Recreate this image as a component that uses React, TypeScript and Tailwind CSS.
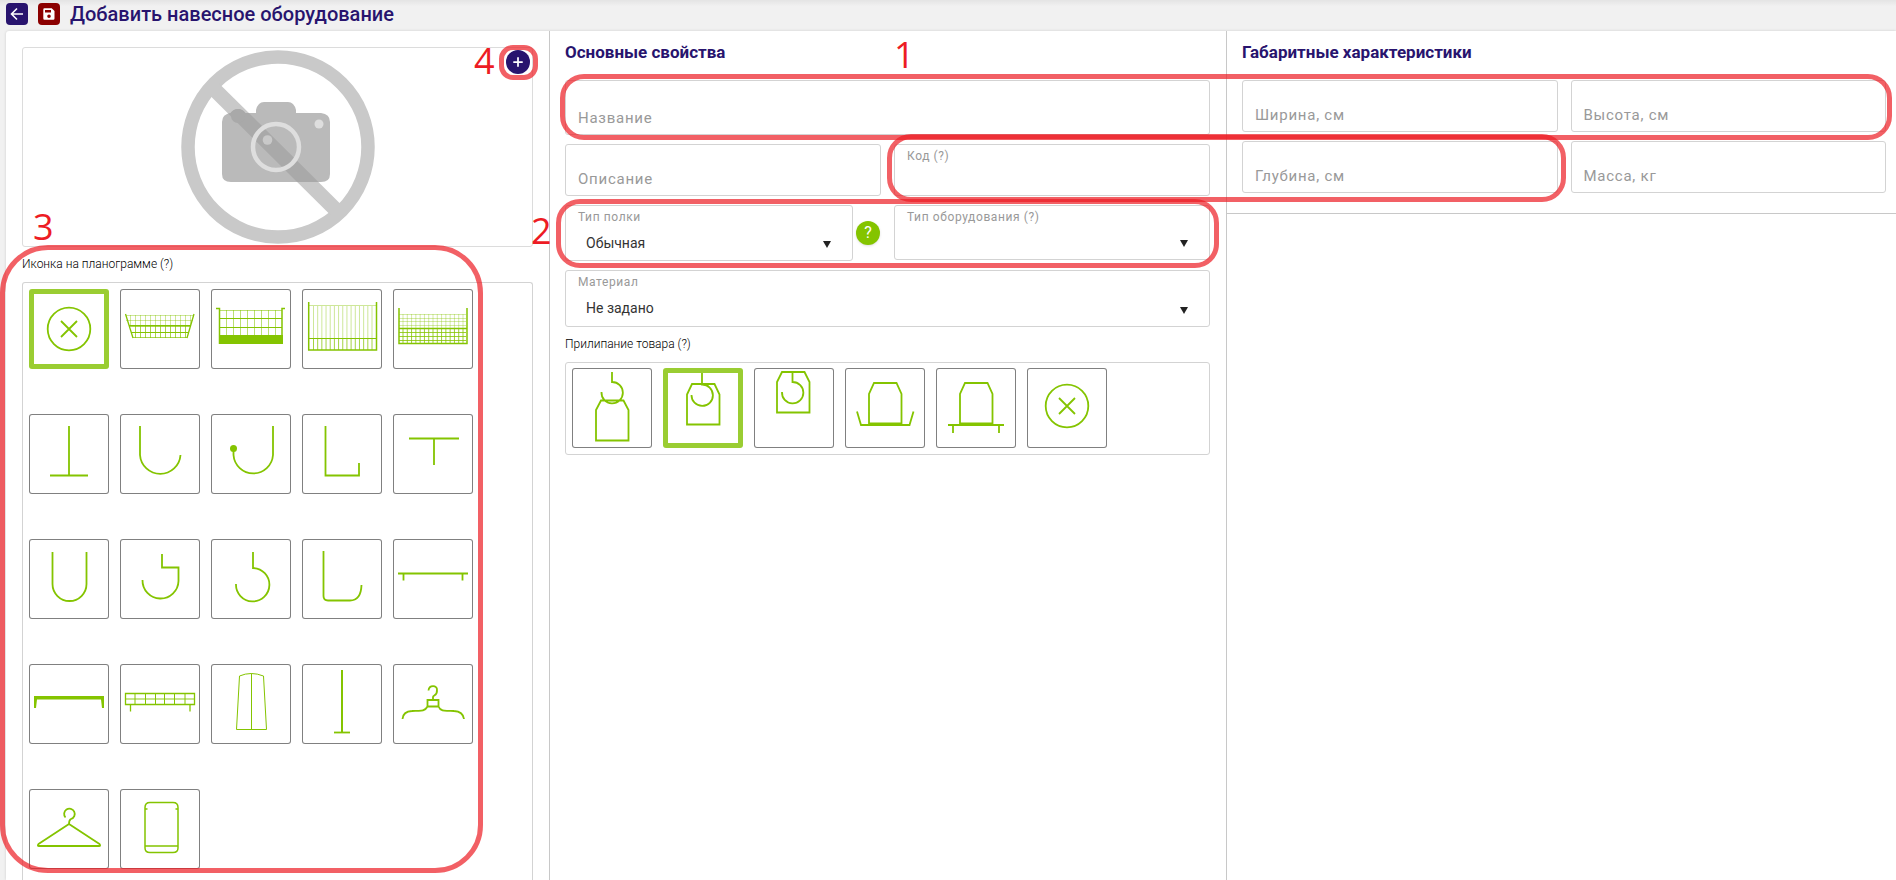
import { useId, useState } from 'react'
import type { ReactNode } from 'react'
import { Plus } from 'lucide-react'
import clsx from 'clsx'

const GREEN = '#84c400'

function lines(from: number, to: number, count: number): number[] {
  return Array.from({ length: count }, (_, i) => from + ((to - from) * i) / (count - 1))
}

const vertical = (xs: number[], y1: number, y2: number) => xs.map(x => `M${x} ${y1}V${y2}`).join('')
const horizontal = (ys: number[], x1: number, x2: number) => ys.map(y => `M${x1} ${y}H${x2}`).join('')

interface TileIcon {
  id: string
  label: string
  art: ReactNode
}

// All tile drawings share an 80x80 canvas
const PLANOGRAM_ICONS: TileIcon[] = [
  {
    id: 'none',
    label: 'Без иконки',
    art: (
      <>
        <circle cx="40" cy="40" r="21.300" />
        <path d="M32 32l16 16M48 32L32 48" />
      </>
    ),
  },
  {
    id: 'basket-slanted',
    label: 'Корзина наклонная',
    art: (
      <>
        <path strokeWidth="1" opacity=".4" d={vertical(lines(10.5, 70.5, 13), 26, 36) + horizontal([26.5, 31.5], 6, 73)} />
        <path strokeWidth="1" opacity=".7" d={vertical(lines(15.5, 65.5, 11), 37, 49) + horizontal([48.5], 13, 67)} />
        <path strokeWidth="1" d="M11 43.500H69M9 36.500H71M9 37.200H71" />
        <path strokeWidth="1.300" d="M5.500 25L13 49M67 49L74 25" />
      </>
    ),
  },
  {
    id: 'basket-solid',
    label: 'Корзина с дном',
    art: (
      <>
        <path strokeWidth="1" opacity=".55" d={vertical(lines(15.5, 64.5, 8), 21, 47) + 'M8 21.500H71'} />
        <path strokeWidth="1" d={horizontal([29.5, 38.5], 8, 71)} />
        <path strokeWidth="1.500" d="M5 19.500H8.500V55M71 55V19.500H74" />
        <path fill={GREEN} stroke="none" d="M8 46h64v9H8z" />
      </>
    ),
  },
  {
    id: 'basket-tall',
    label: 'Корзина высокая',
    art: (
      <>
        <path strokeWidth="1" opacity=".4" d={vertical(lines(11.5, 70, 15), 17, 49) + horizontal([16.5], 7, 74)} />
        <path strokeWidth="1" opacity=".75" d={vertical(lines(11.5, 70, 15), 49, 61)} />
        <path strokeWidth="1" d="M7 49.500H74" />
        <path strokeWidth="1.500" d="M6.700 13V61H74.500V13" />
      </>
    ),
  },
  {
    id: 'basket-mesh',
    label: 'Корзина сетчатая',
    art: (
      <>
        <path strokeWidth="1" opacity=".35" d={vertical(lines(10, 70, 15), 25, 39) + horizontal([25.5, 29.5, 32.5, 36.5], 6, 73)} />
        <path strokeWidth="1" opacity=".8" d={vertical(lines(10, 70, 15), 39, 54) + horizontal([43.5, 47.5, 51.5], 6, 73)} />
        <path strokeWidth="1.300" d="M6 39.500H74" />
        <path strokeWidth="1.500" d="M6 19V54.500H74V19" />
      </>
    ),
  },
  { id: 'stand', label: 'Стойка', art: <path d="M40 12V61M21 61.500H59" /> },
  { id: 'hook-j', label: 'Крючок J', art: <path d="M20 12V41A20.300 20.300 0 0 0 60.500 41" /> },
  {
    id: 'hook-ball',
    label: 'Крючок с шариком',
    art: (
      <>
        <path d="M62 12V41A19.800 19.800 0 0 1 22.500 41V35" />
        <circle cx="22.500" cy="34.500" r="3.500" fill={GREEN} stroke="none" />
      </>
    ),
  },
  { id: 'hook-l', label: 'Крючок L', art: <path d="M23.500 12V61.500H57V49" /> },
  { id: 'tee', label: 'Полка Т', art: <path d="M16 24.500H66M41 24.500V51" /> },
  { id: 'hook-u', label: 'Крючок U', art: <path d="M23.500 13V45A17 17 0 0 0 57.500 45V13" /> },
  { id: 'hook-step', label: 'Крючок со ступенью', art: <path d="M42 15V28.500H58.500V42A18 18 0 0 1 22.500 41" /> },
  { id: 'hook-round', label: 'Крючок круглый', art: <path d="M42 13V29A16.700 16.700 0 1 1 25 45" /> },
  { id: 'hook-curve', label: 'Крючок скруглённый', art: <path d="M21.500 12V57Q21.500 61.500 26 61.500H48Q59 61.500 59.500 46" /> },
  { id: 'shelf', label: 'Полка', art: <path d="M5 34.500H75M10.500 34V41.500M69.500 34V41.500" /> },
  { id: 'shelf-thick', label: 'Полка толстая', art: <path fill={GREEN} stroke="none" d="M5 32H75V44H73L72 35.500H8L7 44H5Z" /> },
  {
    id: 'shelf-mesh',
    label: 'Полка сетчатая',
    art: (
      <>
        <path strokeWidth="1" d={vertical([15, 25.5, 35.5, 44.5, 54.5, 65], 30, 41)} />
        <path strokeWidth="1.500" opacity=".6" d="M5 35H75" />
        <path strokeWidth="1.300" d="M5.500 29.500H74.500V40.500H5.500ZM10.500 41V47.500M70 41V47.500" />
      </>
    ),
  },
  { id: 'garment', label: 'Одежда', art: <path strokeWidth="1" d="M25.500 65.500L28.500 12Q40 7 52.500 12L55.500 65.500ZM40.500 9.500V65" /> },
  {
    id: 'pole',
    label: 'Штанга',
    art: (
      <>
        <path strokeWidth="2" d="M40 6V69" />
        <path d="M32 68.500H48" />
      </>
    ),
  },
  {
    id: 'hanger-suit',
    label: 'Плечики',
    art: <path d="M35.500 26.500C36 20.500 44.500 21 44 26C44.500 32 40 31 40 33V36M34.500 36H45.500V42.500H34.500ZM34.500 42.500C31 49 25 46 19 47Q10 47.500 9.500 55M45.500 42.500C48 49 55 46 61 47Q70 47.500 71 55" />,
  },
  {
    id: 'hanger',
    label: 'Вешалка',
    art: <path strokeLinejoin="round" d="M36.500 28.500A5.300 5.300 0 1 1 42 30Q40 31 40 35L9.500 55Q8 57 10 57H70Q72 57 70.500 55L40 35" />,
  },
  {
    id: 'pouch',
    label: 'Пакет',
    art: <path strokeWidth="1.500" d="M30 13.500H53Q58 13.500 58 18.500V59Q58 63.500 53 63.500H30Q25 63.500 25 59V18.500Q25 13.500 30 13.500ZM25 57H58M25 20H27.500M55.500 20H58" />,
  },
]

const STICKING_ICONS: TileIcon[] = [
  { id: 'below', label: 'Под крючком', art: <path d="M40 4V14A10.700 10.700 0 1 1 29.500 24M29 32.500H51.500L56.500 42V72.500H24V42Z" /> },
  { id: 'on', label: 'На крючке', art: <path d="M39 5V16.500A10.700 10.700 0 1 1 28.500 27M29 16H51.500L56.500 26.500V56.500H24V26.500Z" /> },
  { id: 'above', label: 'Над крючком', art: <path d="M38.500 4V14A10.700 10.700 0 1 1 28 24M28 4H50.500L55.500 14V44.500H23V14Z" /> },
  { id: 'tray', label: 'В лотке', art: <path d="M29 15H51.500L56.500 26V55.500H24V26ZM12 43.500L16 57H64.500L68.500 43.500" /> },
  { id: 'on-shelf', label: 'На полке', art: <path d="M29 15H51.500L56.500 26V55.500H24V26ZM12 57H68M17 57V65M63 57V65" /> },
  {
    id: 'none',
    label: 'Нет',
    art: (
      <>
        <circle cx="40" cy="38" r="21.300" />
        <path d="M32 30l16 16M48 30L32 46" />
      </>
    ),
  },
]

interface TileProps {
  label: string
  selected: boolean
  onClick: () => void
  children: ReactNode
}

function Tile({ label, selected, onClick, children }: TileProps) {
  return (
    <button
      type="button"
      aria-label={label}
      aria-pressed={selected}
      onClick={onClick}
      className={clsx(
        'w-20 h-20 shrink-0 rounded-[3px] bg-white',
        selected ? 'ring-[5px] ring-inset ring-[#9acd32]' : 'ring-1 ring-inset ring-[#808080]',
      )}
    >
      <svg viewBox="0 0 80 80" className="w-full h-full" fill="none" stroke={GREEN} strokeWidth="1.8">
        {children}
      </svg>
    </button>
  )
}

const FIELD_BOX = 'flex flex-col min-w-0 rounded-[3px] border border-[#d3d3d3]'
const FIELD_LABEL = 'px-3 pt-[3px] text-xs leading-4 tracking-wider text-[#999]'

interface FieldProps {
  label: string
  className?: string
}

function TextField({ label, className = 'h-[52px]' }: FieldProps) {
  return (
    <div className={clsx(FIELD_BOX, 'justify-end', className)}>
      <input
        placeholder={label}
        aria-label={label}
        className="w-full h-8 min-w-0 px-3 bg-transparent text-[15px] tracking-wider text-[#333] placeholder:text-[#999] outline-none"
      />
    </div>
  )
}

function FilledField({ label, className = 'h-[52px]' }: FieldProps) {
  const id = useId()
  return (
    <div className={clsx(FIELD_BOX, className)}>
      <label htmlFor={id} className={FIELD_LABEL}>{label}</label>
      <input id={id} className="flex-1 w-full min-w-0 px-3 bg-transparent text-sm text-[#333] outline-none" />
    </div>
  )
}

function SelectField({ label, options, className }: FieldProps & { options: string[] }) {
  const id = useId()
  return (
    <div className={clsx('relative', FIELD_BOX, className)}>
      <label htmlFor={id} className={FIELD_LABEL}>{label}</label>
      <select id={id} className="flex-1 w-full appearance-none px-5 bg-transparent text-sm text-[#333] outline-none">
        {options.map(o => <option key={o}>{o}</option>)}
      </select>
      <svg viewBox="0 0 8 7" className="absolute right-[21px] bottom-3 w-2 h-[7px] pointer-events-none" fill="#222">
        <path d="M0 0h8L4 7z" />
      </svg>
    </div>
  )
}

const CAMERA = 'M50 63H75V60Q77 52 83 52H107Q113 52 115 60V63H140Q149 64 149 72V124Q149 132 140 132H50Q41 132 41 124V72Q41 64 50 63Z'

function NoPhoto() {
  return (
    <svg viewBox="0 0 194 194" className="w-[194px] h-[194px]" role="img" aria-label="Нет изображения">
      <clipPath id="camera-body">
        <path d={CAMERA} />
        <circle cx="57" cy="68" r="9" />
      </clipPath>
      <circle cx="97" cy="97" r="90" fill="none" stroke="#c9c9c9" strokeWidth="13.500" />
      <path stroke="#c9c9c9" strokeWidth="15" d="M33 39L155 160" />
      <path fill="#bababa" d={CAMERA} />
      <path stroke="#a9a9a9" strokeWidth="15" d="M33 39L155 160" clipPath="url(#camera-body)" />
      <circle cx="57" cy="66" r="7" fill="#a9a9a9" />
      <circle cx="95" cy="97" r="23" fill="none" stroke="#dedede" strokeWidth="4.500" />
      <circle cx="86.500" cy="90" r="4.800" fill="#c9c9c9" />
      <circle cx="138" cy="74" r="4.500" fill="#dedede" />
    </svg>
  )
}

const MARK = 'absolute border-[5px] border-[#ed1c24] opacity-70'
const MARK_NUMBER = "absolute font-['Open_Sans',sans-serif] text-4xl leading-9 text-[#ed1c24]"

// Tutorial marks laid over the form
function Annotations() {
  return (
    <div aria-hidden="true" className="absolute inset-0 pointer-events-none">
      <div className={clsx(MARK, 'left-[560px] top-[74px] right-1 h-[66px] rounded-[24px]')} />
      <div className={clsx(MARK, 'left-[887px] top-[134px] w-[679px] h-[68px] rounded-[24px]')} />
      <div className={clsx(MARK, 'left-[556px] top-[199px] w-[663px] h-[69px] rounded-[24px]')} />
      <div className={clsx(MARK, 'left-0 top-[245px] w-[483px] h-[628px] rounded-[48px]')} />
      <div className={clsx(MARK, 'left-[499px] top-[45px] w-[39px] h-[35px] rounded-[14px]')} />
      <span className={clsx(MARK_NUMBER, 'left-[894px] top-[37px]')}>1</span>
      <span className={clsx(MARK_NUMBER, 'left-[531px] top-[213px]')}>2</span>
      <span className={clsx(MARK_NUMBER, 'left-[33px] top-[209px]')}>3</span>
      <span className={clsx(MARK_NUMBER, 'left-[474px] top-[43px]')}>4</span>
    </div>
  )
}

export default function App() {
  const [icon, setIcon] = useState('none')
  const [sticking, setSticking] = useState('on')

  return (
    <div className="relative h-screen overflow-hidden flex flex-col bg-[#f1f1f1] font-[Roboto,sans-serif] text-[#333]">
      <header className="flex items-start h-[31px] shrink-0 pl-1.5 pt-[3px] bg-linear-to-b from-[#e4e4e4] to-[#f1f1f1] to-20%">
        <button type="button" aria-label="Назад" className="w-[22px] h-[22px] rounded bg-[#28146e] text-white">
          <svg viewBox="0 0 22 22" className="w-full h-full" fill="none" stroke="currentColor" strokeWidth="1.600">
            <path d="M17 11H6M11 5.500L5.500 11L11 16.500" />
          </svg>
        </button>
        <button type="button" aria-label="Сохранить" className="ml-2.5 w-[22px] h-[22px] rounded bg-[#8b0000] text-white">
          <svg viewBox="0 0 22 22" className="w-full h-full" fill="currentColor" fillRule="evenodd">
            <path d="M6.500 5.200H13.700L16.500 8V15.500Q16.500 16.700 15.300 16.700H6.500Q5.300 16.700 5.300 15.500V6.500Q5.300 5.200 6.500 5.200ZM7 7V9.400H13V7ZM11 11.500A1.800 1.800 0 1 0 11 15.100A1.800 1.800 0 1 0 11 11.500Z" />
          </svg>
        </button>
        <h1 className="ml-2.5 text-xl leading-[22px] font-medium text-[#28146e]">Добавить навесное оборудование</h1>
      </header>

      <main className="flex flex-1 min-h-0 ml-1.5 bg-white rounded-tl-[3px] shadow-[0_0_3px_rgba(0,0,0,0.15)]">
        <section className="flex flex-col w-[544px] shrink-0 pt-4 px-4 border-r border-[#c8c8c8]">
          <div className="relative flex justify-center items-center h-[200px] shrink-0 rounded-[3px] border border-[#dcdcdc]">
            <NoPhoto />
            <button type="button" aria-label="Добавить фото" className="absolute right-[2px] top-[2px] flex items-center justify-center w-6 h-6 rounded-full bg-[#28146e] text-white">
              <Plus size={14} strokeWidth={3} />
            </button>
          </div>
          <h2 className="mt-[9px] mb-2.5 text-xs leading-4 font-light text-black">Иконка на планограмме (?)</h2>
          <div className="flex flex-wrap content-start gap-x-[11px] gap-y-[45px] flex-1 pl-1.5 pt-1.5 pr-11 border border-b-0 border-[#d3d3d3] rounded-t-[3px]">
            {PLANOGRAM_ICONS.map(({ id, label, art }) => (
              <Tile key={id} label={label} selected={icon === id} onClick={() => setIcon(id)}>{art}</Tile>
            ))}
          </div>
        </section>

        <section className="w-[677px] shrink-0 pt-2.5 pl-[15px] pr-4 border-r border-[#c8c8c8]">
          <h2 className="mb-[17px] text-[17px] leading-[22px] font-bold text-[#28146e]">Основные свойства</h2>
          <TextField label="Название" className="h-[55px]" />
          <div className="grid grid-cols-2 gap-x-[13px] mt-[9px]">
            <TextField label="Описание" />
            <FilledField label="Код (?)" />
          </div>
          <div className="grid grid-cols-2 gap-x-[13px] mt-[9px]">
            <div className="flex items-center gap-[3px]">
              <SelectField label="Тип полки" options={['Обычная']} className="flex-1 h-14" />
              <button type="button" aria-label="Справка" className="mr-px w-6 h-6 rounded-full bg-[#84c400] text-white text-base leading-6 shadow">?</button>
            </div>
            <SelectField label="Тип оборудования (?)" options={['']} className="h-[55px]" />
          </div>
          <SelectField label="Материал" options={['Не задано']} className="mt-[9px] h-[57px]" />
          <h3 className="mt-[9px] mb-2.5 text-xs leading-4 font-light text-black">Прилипание товара (?)</h3>
          <div className="flex gap-[11px] h-[93px] pl-1.5 pt-[5px] rounded-[3px] border border-[#d3d3d3]">
            {STICKING_ICONS.map(({ id, label, art }) => (
              <Tile key={id} label={label} selected={sticking === id} onClick={() => setSticking(id)}>{art}</Tile>
            ))}
          </div>
        </section>

        <section className="flex-1 min-w-0">
          <div className="pt-2.5 pl-[15px] pr-2.5 pb-5 border-b border-[#c8c8c8]">
            <h2 className="mb-[17px] text-[17px] leading-[22px] font-bold text-[#28146e]">Габаритные характеристики</h2>
            <div className="grid grid-cols-2 gap-x-[13px] gap-y-[9px]">
              <TextField label="Ширина, см" />
              <TextField label="Высота, см" />
              <TextField label="Глубина, см" />
              <TextField label="Масса, кг" />
            </div>
          </div>
        </section>
      </main>

      <Annotations />
    </div>
  )
}
